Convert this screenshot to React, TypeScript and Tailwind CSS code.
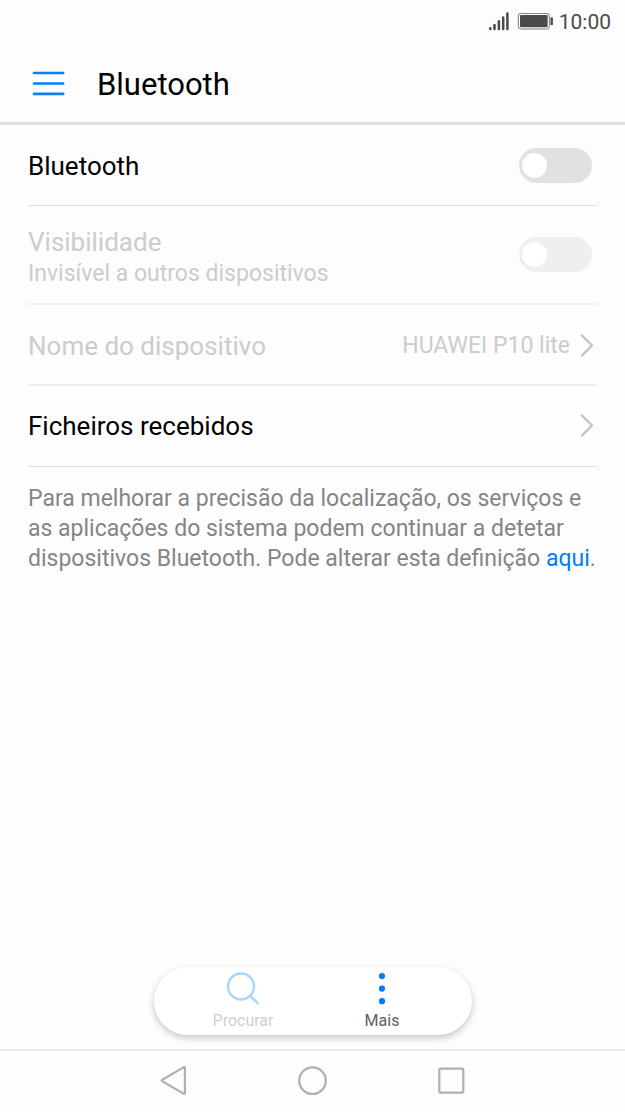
import type { ReactNode } from 'react'

function StatusBar() {
  return (
    <div className="flex h-11 items-center justify-end pr-3.5 text-[#4a4a4a]">
      <svg width="22" height="20" viewBox="0 0 22 20" fill="none" stroke="currentColor" strokeWidth="2.5" strokeLinecap="round" aria-hidden="true">
        <path d="M3.3 17v-.8M7.5 17v-4M11.9 17v-7.8M16.2 17V5.5M20.4 17V1.5" />
      </svg>
      <svg className="ml-2" width="36" height="18" viewBox="0 0 36 18" fill="none" aria-hidden="true">
        <rect x="1.3" y=".4" width="31" height="15.6" rx="2.6" stroke="#777" strokeWidth="1" />
        <rect x="3" y="2.1" width="27.6" height="12.2" rx="1" fill="currentColor" />
        <rect x="33.5" y="4.2" width="2.4" height="8" rx=".8" fill="currentColor" />
      </svg>
      <span className="ml-1.5 text-[21px] leading-6">10:00</span>
    </div>
  )
}

function Switch({ id, disabled = false }: { id: string; disabled?: boolean }) {
  return (
    <input
      id={id}
      type="checkbox"
      role="switch"
      disabled={disabled}
      className="mr-[5px] flex h-[35px] w-[73px] shrink-0 appearance-none items-center rounded-full bg-[#e1e1e1] px-[3px] before:size-[25px] before:rounded-full before:bg-white checked:justify-end checked:bg-[#007dff] disabled:bg-[#efefef]"
    />
  )
}

function Chevron() {
  return (
    <svg className="mr-[3px] shrink-0" width="14" height="24" viewBox="0 0 14 24" fill="none" stroke="#c4c4c4" strokeWidth="2.4" strokeLinecap="round" strokeLinejoin="round" aria-hidden="true">
      <path d="M2 1.5l10 10L2 21.5" />
    </svg>
  )
}

function ToolbarButton({ label, disabled = false, children }: { label: string; disabled?: boolean; children: ReactNode }) {
  return (
    <button
      type="button"
      disabled={disabled}
      className="flex w-[139px] flex-col items-center gap-1 pt-0.5 text-base leading-6 text-[#606060] disabled:text-[#cfcfcf]"
    >
      {children}
      {label}
    </button>
  )
}

export default function App() {
  return (
    <div className="flex min-h-screen flex-col bg-[#fdfdfd] font-[Roboto,sans-serif] text-black">
      <StatusBar />

      <header className="flex h-[81px] items-center border-b-[3px] border-[#e1e1e1] pt-0.5 pl-8">
        <button type="button" aria-label="Menu">
          <svg width="33" height="26" viewBox="0 0 33 26" fill="none" stroke="#0a80f0" strokeWidth="2.6" strokeLinecap="round">
            <path d="M2 2h29.2M2 12.5h29.2M2 22.9h29.2" />
          </svg>
        </button>
        <h1 className="ml-8 pt-0.5 text-[31px] leading-9">Bluetooth</h1>
      </header>

      {/* Settings */}
      <main className="flex flex-1 flex-col px-7">
        <div className="flex h-[81px] items-center justify-between border-b border-[#e1e1e1]">
          <label htmlFor="bluetooth" className="pt-0.5 text-[26px] leading-8">
            Bluetooth
          </label>
          <Switch id="bluetooth" />
        </div>

        <div className="flex h-[99px] items-center justify-between border-b-2 border-[#efefef] text-[#cccccc]">
          <label htmlFor="visibility" className="pt-1.5">
            <span className="block text-[26px] leading-8">Visibilidade</span>
            <span className="block text-[23px] leading-8">Invisível a outros dispositivos</span>
          </label>
          <Switch id="visibility" disabled />
        </div>

        <button type="button" disabled className="flex h-[81px] items-center border-b-2 border-[#efefef] pt-0.5 text-left text-[#cccccc]">
          <span className="flex-1 text-[26px] leading-8">Nome do dispositivo</span>
          <span className="mr-2.5 text-[23px] leading-8">HUAWEI P10 lite</span>
          <Chevron />
        </button>

        <button type="button" className="flex h-[81px] items-center border-b border-[#e1e1e1] text-left">
          <span className="flex-1 text-[26px] leading-8">Ficheiros recebidos</span>
          <Chevron />
        </button>

        <p className="pt-[17px] text-[23px] leading-[30px] text-[#858585]">
          Para melhorar a precisão da localização, os serviços e as aplicações do sistema podem continuar a detetar
          dispositivos Bluetooth. Pode alterar esta definição{' '}
          <a href="#" className="text-[#007dff]">
            aqui
          </a>
          .
        </p>

        {/* Floating toolbar */}
        <div className="mx-auto mt-auto mb-3.5 flex h-[68px] items-center rounded-full bg-white px-5 shadow-[0_3px_7px_rgba(0,0,0,0.22)]">
          <ToolbarButton label="Procurar" disabled>
            <svg width="34" height="34" viewBox="0 0 34 34" fill="none" stroke="#a6d6fb" strokeWidth="2.4" strokeLinecap="round" aria-hidden="true">
              <circle cx="15" cy="15.5" r="13" />
              <path d="M24.4 24.9l7.4 7.4" />
            </svg>
          </ToolbarButton>
          <ToolbarButton label="Mais">
            <svg width="34" height="34" viewBox="0 0 34 34" fill="#007dff" aria-hidden="true">
              <circle cx="17" cy="5" r="3.1" />
              <circle cx="17" cy="17.6" r="3.1" />
              <circle cx="17" cy="30.2" r="3.1" />
            </svg>
          </ToolbarButton>
        </div>
      </main>

      {/* System navigation */}
      <nav className="flex h-[63px] items-center justify-center border-t-2 border-[#ececec] pb-0.5">
        <button type="button" aria-label="Voltar" className="flex w-[139px] justify-center">
          <svg width="30" height="30" viewBox="0 0 30 30" fill="none" stroke="#b0b0b0" strokeWidth="2.2" strokeLinejoin="round">
            <path d="M25.9 1.7v25.6a.7.7 0 0 1-1 .6L3.3 15.3a.9.9 0 0 1 0-1.6L24.9 1.1a.7.7 0 0 1 1 .6Z" />
          </svg>
        </button>
        <button type="button" aria-label="Início" className="flex w-[139px] justify-center">
          <svg width="30" height="30" viewBox="0 0 30 30" fill="none" stroke="#b0b0b0" strokeWidth="2.2">
            <circle cx="14.5" cy="14.7" r="13.3" />
          </svg>
        </button>
        <button type="button" aria-label="Recentes" className="flex w-[139px] justify-center">
          <svg width="30" height="30" viewBox="0 0 30 30" fill="none" stroke="#b0b0b0" strokeWidth="2.2">
            <rect x="2.3" y="2.7" width="24" height="24" rx="1" />
          </svg>
        </button>
      </nav>
    </div>
  )
}
